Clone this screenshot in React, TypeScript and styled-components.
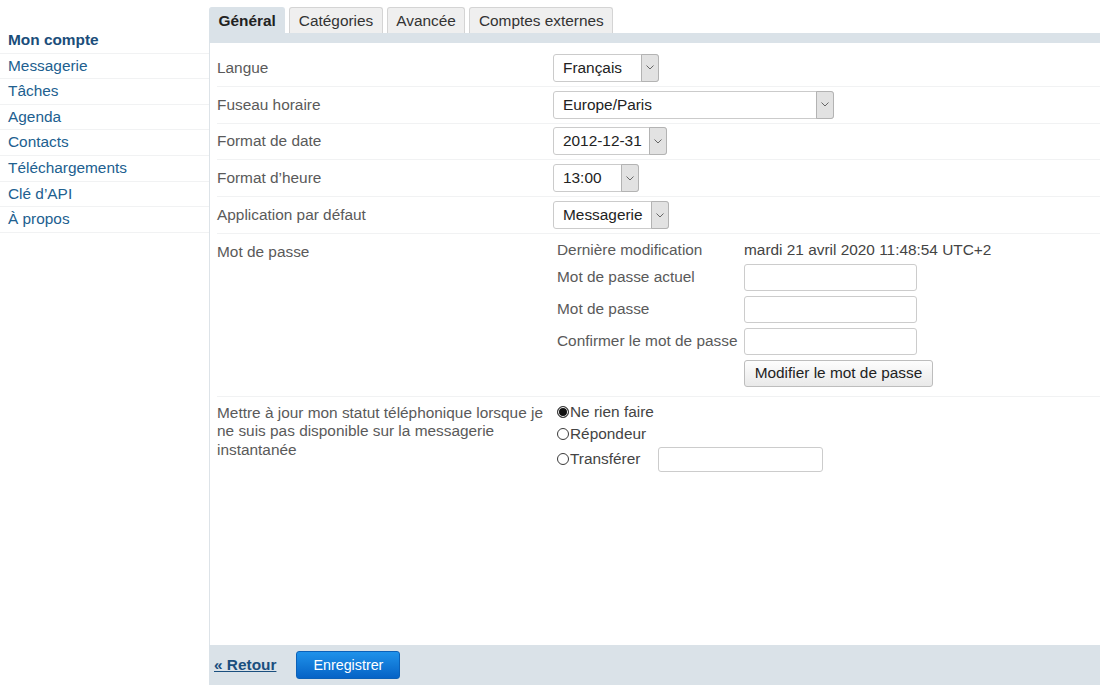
import React, { useState } from "react";
import styled, { createGlobalStyle } from "styled-components";

const GlobalStyle = createGlobalStyle`
  html, body {
    margin: 0;
    padding: 0;
    background: #fff;
  }
  body {
    font-family: "Liberation Sans", Arial, sans-serif;
    font-size: 15.4px;
    color: #333;
  }
  * {
    box-sizing: border-box;
  }
`;

const Page = styled.div`
  display: flex;
  height: 685px;
`;

const Sidebar = styled.nav`
  width: 209px;
  flex-shrink: 0;
  padding-top: 28px;
`;

const NavItem = styled.a<{ $active?: boolean }>`
  display: block;
  height: 25.6px;
  line-height: 24.6px;
  padding-left: 8px;
  border-bottom: 1px solid #f1f2f3;
  color: ${(p) => (p.$active ? "#1a4d7a" : "#21608f")};
  font-weight: ${(p) => (p.$active ? "bold" : "normal")};
  text-decoration: none;
  cursor: pointer;
`;

const Main = styled.div`
  flex: 1;
  display: flex;
  flex-direction: column;
  min-width: 0;
`;

const TabBar = styled.div`
  display: flex;
  gap: 4px;
  padding-top: 7px;
`;

const Tab = styled.div<{ $active?: boolean }>`
  height: 26px;
  line-height: 25px;
  padding: 0 8.5px;
  border: 1px solid ${(p) => (p.$active ? "#dae2e8" : "#d4d4d4")};
  border-bottom: none;
  border-radius: 3px 3px 0 0;
  background: ${(p) => (p.$active ? "#dae2e8" : "#efefef")};
  color: ${(p) => (p.$active ? "#222" : "#333")};
  font-weight: ${(p) => (p.$active ? "bold" : "normal")};
  cursor: pointer;
`;

const Band = styled.div`
  height: 10px;
  background: #dae2e8;
`;

const Content = styled.div`
  flex: 1;
  border-left: 1px solid #dde3e8;
  padding-top: 7px;
`;

const FormRow = styled.div<{ $last?: boolean }>`
  display: flex;
  margin-left: 7px;
  padding: 3.9px 0;
  border-bottom: 1px solid ${(p) => (p.$last ? "transparent" : "#f1f2f3")};
`;

const Label = styled.div<{ $top?: number }>`
  width: 336px;
  flex-shrink: 0;
  color: #5a5a5a;
  line-height: 18.5px;
  padding: ${(p) => p.$top ?? 5}px 2px 0 0;
`;

const Value = styled.div`
  flex: 1;
`;

const SelectBox = styled.div<{ $width: number }>`
  display: inline-flex;
  width: ${(p) => p.$width}px;
  height: 28px;
  border: 1px solid #cbcbcb;
  border-radius: 3px;
  background: #fff;
  color: #222;
  cursor: pointer;
`;

const SelectText = styled.span`
  flex: 1;
  padding-left: 9px;
  line-height: 26px;
  white-space: nowrap;
`;

const ArrowBox = styled.span`
  width: 18px;
  margin: -1px -1px -1px 0;
  display: flex;
  align-items: center;
  justify-content: center;
  background: #e2e2e2;
  border: 1px solid #b3b3b3;
  border-radius: 0 3px 3px 0;
`;

const PasswordGrid = styled.div`
  display: grid;
  grid-template-columns: 187px auto;
  grid-template-rows: 21px repeat(4, 27px);
  row-gap: 5px;
  align-items: center;
  padding: 0 0 5.4px 4px;
  color: #5a5a5a;
`;

const InfoText = styled.span<{ $dark?: boolean }>`
  align-self: start;
  padding-top: 3px;
  line-height: 18px;
  white-space: nowrap;
  color: ${(p) => (p.$dark ? "#444" : "#5a5a5a")};
`;

const GridText = styled.span`
  white-space: nowrap;
`;

const TextInput = styled.input<{ $width: number; $height?: number }>`
  width: ${(p) => p.$width}px;
  height: ${(p) => p.$height ?? 27}px;
  border: 1px solid #cccccc;
  border-radius: 3px;
  background: #fff;
  padding: 0 6px;
  font: inherit;
  outline: none;
`;

const GrayButton = styled.button`
  grid-column: 2;
  justify-self: start;
  width: 189px;
  height: 27px;
  border: 1px solid #bdbdbd;
  border-radius: 3px;
  background: linear-gradient(#fdfdfd, #e9e9e9);
  color: #222;
  font: inherit;
  cursor: pointer;
`;

const RadioList = styled.div`
  display: flex;
  flex-direction: column;
  padding-left: 4px;
`;

const RadioOption = styled.label<{ $tall?: boolean }>`
  display: flex;
  align-items: center;
  height: ${(p) => (p.$tall ? 25 : 22)}px;
  margin-top: ${(p) => (p.$tall ? 2 : 0)}px;
  color: #444;
  cursor: pointer;
`;

const RadioDot = styled.span<{ $checked?: boolean }>`
  width: 12px;
  height: 12px;
  margin-right: 1px;
  border: 1px solid #3a3a3a;
  border-radius: 50%;
  background: ${(p) => (p.$checked ? "#111" : "#fff")};
  box-shadow: ${(p) => (p.$checked ? "inset 0 0 0 1px #fff" : "none")};
`;

const ForwardInput = styled(TextInput)`
  margin-left: 18px;
`;

const Footer = styled.div`
  height: 40px;
  flex-shrink: 0;
  display: flex;
  align-items: center;
  gap: 20px;
  padding-left: 5px;
  background: #dae2e8;
`;

const BackLink = styled.a`
  color: #1a4f7e;
  font-weight: bold;
  text-decoration: underline;
  cursor: pointer;
`;

const SaveButton = styled.button`
  height: 28px;
  padding: 0 16px;
  border: 1px solid #0b61b8;
  border-radius: 3px;
  background: linear-gradient(#1f92ea, #0663c6);
  color: #fff;
  font-family: inherit;
  font-size: 14.3px;
  cursor: pointer;
`;

const Chevron = () => (
  <svg width="8" height="5" viewBox="0 0 8 5">
    <polyline points="0.5,0.5 4,4 7.5,0.5" fill="none" stroke="#666" strokeWidth="1" />
  </svg>
);

const Select = ({ value, width }: { value: string; width: number }) => (
  <SelectBox $width={width}>
    <SelectText>{value}</SelectText>
    <ArrowBox>
      <Chevron />
    </ArrowBox>
  </SelectBox>
);

const navItems = [
  "Messagerie",
  "Tâches",
  "Agenda",
  "Contacts",
  "Téléchargements",
  "Clé d’API",
  "À propos",
];

const tabs = ["Général", "Catégories", "Avancée", "Comptes externes"];

const selects = [
  { label: "Langue", value: "Français", width: 106 },
  { label: "Fuseau horaire", value: "Europe/Paris", width: 281 },
  { label: "Format de date", value: "2012-12-31", width: 114 },
  { label: "Format d’heure", value: "13:00", width: 86 },
  { label: "Application par défaut", value: "Messagerie", width: 116 },
];

export default function App() {
  const [activeTab, setActiveTab] = useState("Général");
  const [phoneMode, setPhoneMode] = useState("none");

  const radios = [
    { key: "none", text: "Ne rien faire" },
    { key: "answer", text: "Répondeur" },
  ];

  return (
    <>
      <GlobalStyle />
      <Page>
        <Sidebar>
          <NavItem $active>Mon compte</NavItem>
          {navItems.map((item) => (
            <NavItem key={item}>{item}</NavItem>
          ))}
        </Sidebar>
        <Main>
          <TabBar>
            {tabs.map((tab) => (
              <Tab key={tab} $active={tab === activeTab} onClick={() => setActiveTab(tab)}>
                {tab}
              </Tab>
            ))}
          </TabBar>
          <Band />
          <Content>
            {selects.map((s) => (
              <FormRow key={s.label}>
                <Label>{s.label}</Label>
                <Value>
                  <Select value={s.value} width={s.width} />
                </Value>
              </FormRow>
            ))}
            <FormRow>
              <Label>Mot de passe</Label>
              <Value>
                <PasswordGrid>
                  <InfoText>Dernière modification</InfoText>
                  <InfoText $dark>mardi 21 avril 2020 11:48:54 UTC+2</InfoText>
                  <GridText>Mot de passe actuel</GridText>
                  <TextInput type="password" $width={173} />
                  <GridText>Mot de passe</GridText>
                  <TextInput type="password" $width={173} />
                  <GridText>Confirmer le mot de passe</GridText>
                  <TextInput type="password" $width={173} />
                  <GrayButton>Modifier le mot de passe</GrayButton>
                </PasswordGrid>
              </Value>
            </FormRow>
            <FormRow $last>
              <Label $top={3}>
                Mettre à jour mon statut téléphonique lorsque je ne suis pas disponible sur la
                messagerie instantanée
              </Label>
              <Value>
                <RadioList>
                  {radios.map((r) => (
                    <RadioOption key={r.key} onClick={() => setPhoneMode(r.key)}>
                      <RadioDot $checked={phoneMode === r.key} />
                      {r.text}
                    </RadioOption>
                  ))}
                  <RadioOption $tall onClick={() => setPhoneMode("forward")}>
                    <RadioDot $checked={phoneMode === "forward"} />
                    Transférer
                    <ForwardInput type="text" $width={165} $height={25} />
                  </RadioOption>
                </RadioList>
              </Value>
            </FormRow>
          </Content>
          <Footer>
            <BackLink>« Retour</BackLink>
            <SaveButton>Enregistrer</SaveButton>
          </Footer>
        </Main>
      </Page>
    </>
  );
}
